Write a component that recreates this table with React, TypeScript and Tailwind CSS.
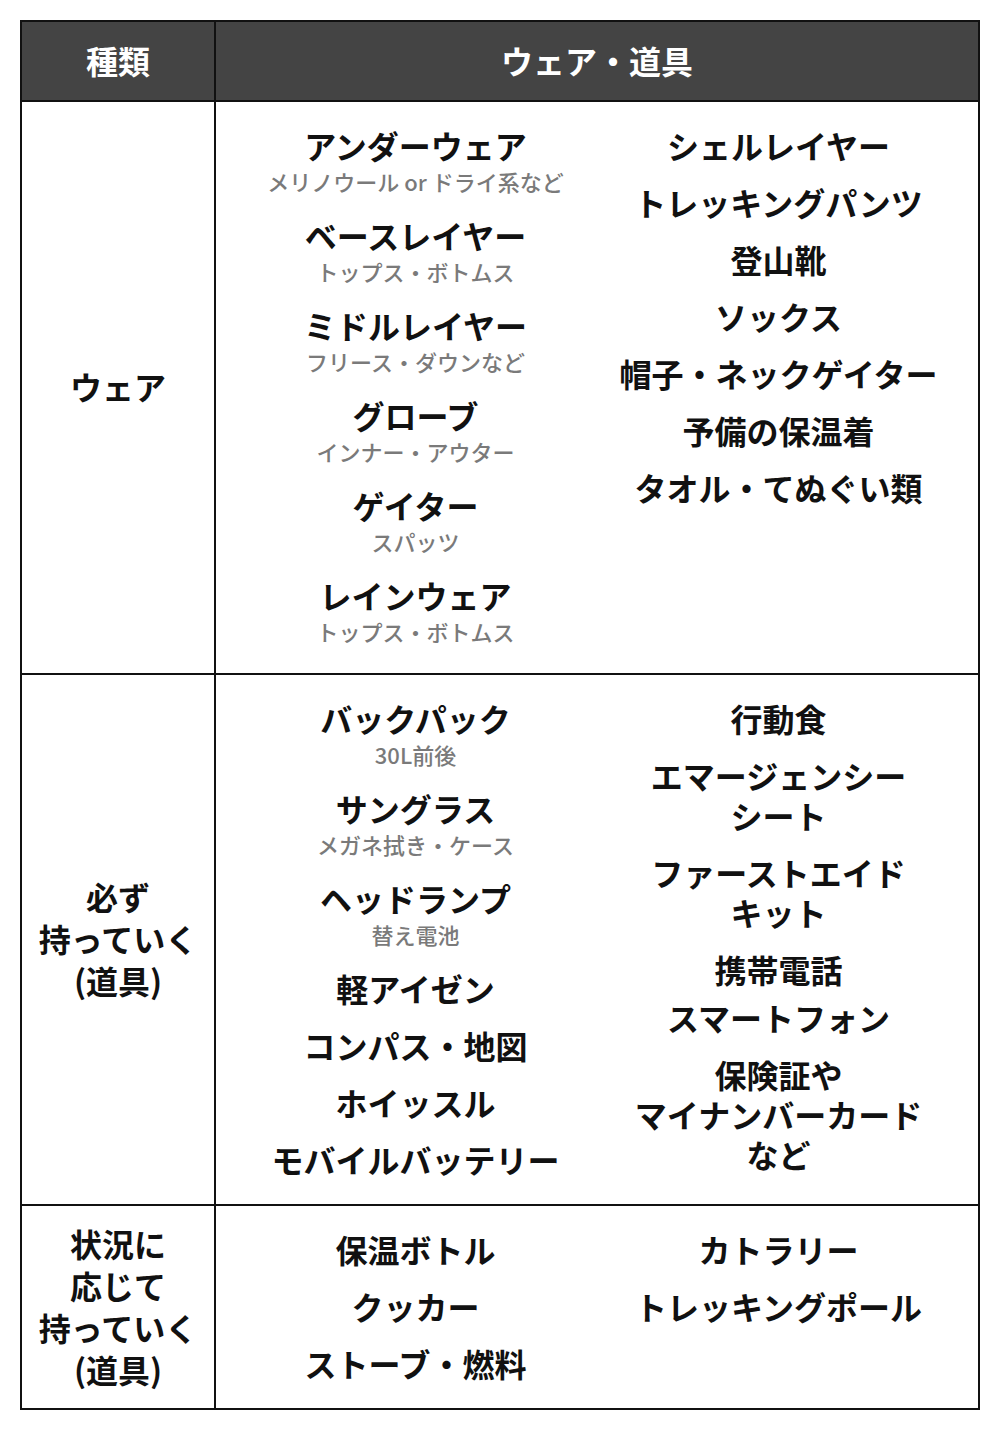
type Item = { name: string; sub?: string };

const font = { fontFamily: '"Noto Sans CJK JP", "Noto Sans", sans-serif' };

function ItemList({ items }: { items: Item[] }) {
  return (
    <div className="flex flex-col items-center gap-[17px]">
      {items.map((it) => (
        <div key={it.name} className="flex flex-col items-center text-center">
          <span className="text-[32px] leading-[40px] font-bold text-[#111]">
            {it.name}
          </span>
          {it.sub && (
            <span className="text-[22px] leading-[33px] font-medium text-[#7a7a7a]">
              {it.sub}
            </span>
          )}
        </div>
      ))}
    </div>
  );
}

function Multi({ lines }: { lines: string[] }) {
  return (
    <div className="flex flex-col items-center text-center text-[32px] leading-[40px] font-bold text-[#111]">
      {lines.map((l) => (
        <span key={l}>{l}</span>
      ))}
    </div>
  );
}

function Row({
  label,
  children,
}: {
  label: string[];
  children: React.ReactNode;
}) {
  return (
    <div className="flex border-t-2 border-[#111]">
      <div className="w-[194px] shrink-0 border-r-2 border-[#111] flex flex-col items-center justify-center pb-[3px] text-[32px] leading-[42px] font-bold text-[#111]">
        {label.map((l) => (
          <span key={l}>{l}</span>
        ))}
      </div>
      <div className="flex-1 grid grid-cols-2 px-[18px] pt-[23px] pb-[25px]">
        {children}
      </div>
    </div>
  );
}

export default function App() {
  return (
    <div className="bg-white w-[1000px] min-h-[1430px] pt-[20px] px-[20px]" style={font}>
      <div className="w-[960px] border-2 border-[#111]">
        <div className="flex h-[78px] bg-[#444444] text-white text-[32px] font-bold">
          <div className="w-[194px] shrink-0 border-r-2 border-[#111] flex items-center justify-center pb-[2px]">
            種類
          </div>
          <div className="flex-1 flex items-center justify-center pb-[2px]">ウェア・道具</div>
        </div>

        <Row label={["ウェア"]}>
          <ItemList
            items={[
              { name: "アンダーウェア", sub: "メリノウール or ドライ系など" },
              { name: "ベースレイヤー", sub: "トップス・ボトムス" },
              { name: "ミドルレイヤー", sub: "フリース・ダウンなど" },
              { name: "グローブ", sub: "インナー・アウター" },
              { name: "ゲイター", sub: "スパッツ" },
              { name: "レインウェア", sub: "トップス・ボトムス" },
            ]}
          />
          <ItemList
            items={[
              { name: "シェルレイヤー" },
              { name: "トレッキングパンツ" },
              { name: "登山靴" },
              { name: "ソックス" },
              { name: "帽子・ネックゲイター" },
              { name: "予備の保温着" },
              { name: "タオル・てぬぐい類" },
            ]}
          />
        </Row>

        <Row label={["必ず", "持っていく", "(道具)"]}>
          <ItemList
            items={[
              { name: "バックパック", sub: "30L前後" },
              { name: "サングラス", sub: "メガネ拭き・ケース" },
              { name: "ヘッドランプ", sub: "替え電池" },
              { name: "軽アイゼン" },
              { name: "コンパス・地図" },
              { name: "ホイッスル" },
              { name: "モバイルバッテリー" },
            ]}
          />
          <div className="flex flex-col items-center gap-[17px]">
            <Multi lines={["行動食"]} />
            <Multi lines={["エマージェンシー", "シート"]} />
            <Multi lines={["ファーストエイド", "キット"]} />
            <div className="flex flex-col items-center gap-2 text-[32px] leading-[40px] font-bold text-[#111]">
              <span>携帯電話</span>
              <span>スマートフォン</span>
            </div>
            <Multi lines={["保険証や", "マイナンバーカード", "など"]} />
          </div>
        </Row>

        <Row label={["状況に", "応じて", "持っていく", "(道具)"]}>
          <ItemList
            items={[
              { name: "保温ボトル" },
              { name: "クッカー" },
              { name: "ストーブ・燃料" },
            ]}
          />
          <ItemList items={[{ name: "カトラリー" }, { name: "トレッキングポール" }]} />
        </Row>
      </div>
    </div>
  );
}
